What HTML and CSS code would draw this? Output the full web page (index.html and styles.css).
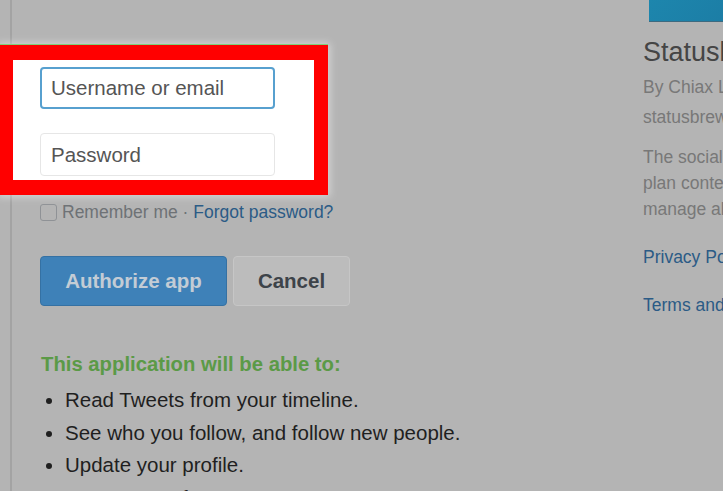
FILE: index.html
```html
<!DOCTYPE html>
<html lang="en">
<head>
<meta charset="utf-8">
<title>Authorize app</title>
<link rel="stylesheet" href="styles.css">
</head>
<body>
<div class="page">
  <main class="main">
    <div class="fields">
      <div class="spot" aria-hidden="true"></div>
      <div class="input focused">Username or email</div>
      <div class="input">Password</div>
    </div>
    <div class="remember">
      <span class="check"></span>
      <span class="rem-text">Remember me · </span><a class="link" href="#">Forgot password?</a>
    </div>
    <div class="buttons">
      <button class="btn btn-primary">Authorize app</button>
      <button class="btn btn-cancel">Cancel</button>
    </div>
    <h2 class="perm-title">This application will be able to:</h2>
    <ul class="perms">
      <li>Read Tweets from your timeline.</li>
      <li>See who you follow, and follow new people.</li>
      <li>Update your profile.</li>
      <li>Post Tweets for you.</li>
    </ul>
  </main>
  <aside class="side">
    <div class="app-logo"></div>
    <h1 class="app-name">Statusbrew</h1>
    <p class="app-by">By Chiax Labs</p>
    <p class="app-url">statusbrew.com</p>
    <p class="app-desc">The social media management platform<br>plan content, engage and grow, and<br>manage all your social accounts.</p>
    <p class="app-link"><a class="link" href="#">Privacy Policy</a></p>
    <p class="app-link"><a class="link" href="#">Terms and Conditions</a></p>
  </aside>
</div>
</body>
</html>
```

FILE: styles.css
```css
* { box-sizing: border-box; }
html, body { margin: 0; padding: 0; }
body {
  background: #b4b4b4;
  font-family: "Liberation Sans", Arial, sans-serif;
  width: 723px;
  height: 491px;
  overflow: hidden;
}
.page {
  display: flex;
  height: 491px;
  overflow: hidden;
}
.main {
  flex: 0 0 633px;
  margin-left: 10px;
  border-left: 2px solid #a3a3a3;
  padding-left: 28px;
  padding-top: 67px;
}
.fields {
  position: relative;
  display: flex;
  flex-direction: column;
  gap: 24px;
  width: 235px;
}
.spot {
  position: absolute;
  left: -40px;
  top: -22px;
  width: 328px;
  height: 150px;
  background: #fff;
  border-style: solid;
  border-color: #ff0000;
  border-width: 15px 14px 15px 13px;
  box-shadow: 0 -1px 0 #7fd27a, 0 0 8px 2px rgba(255,255,255,0.45);
}
.input {
  position: relative;
  height: 42px;
  border: 1px solid #e6e6e6;
  border-radius: 4px;
  background: #fff;
  color: #555;
  font-size: 20.5px;
  line-height: 40px;
  padding-left: 10px;
}
.input.focused {
  border: 2px solid #57a0cf;
  line-height: 38px;
  padding-left: 9px;
}
.input + .input { height: 43px; line-height: 41px; }
.remember {
  display: flex;
  align-items: center;
  margin-top: 27px;
  height: 18px;
  font-size: 17.5px;
  color: #6e7276;
}
.check {
  width: 17px;
  height: 17px;
  border: 1.5px solid #8f9296;
  border-radius: 3px;
  margin-right: 5px;
}
.rem-text { white-space: pre; }
.link { color: #2b5b86; text-decoration: none; }
.buttons {
  display: flex;
  gap: 6px;
  margin-top: 35px;
}
.btn {
  height: 50px;
  border-radius: 4px;
  font-family: "Liberation Sans", Arial, sans-serif;
  font-weight: bold;
  font-size: 20.5px;
  padding: 0;
}
.btn-primary {
  width: 187px;
  background: #3e81b8;
  border: 1px solid #3571a3;
  color: #c3ccd5;
}
.btn-cancel {
  width: 117px;
  background: #bcbcbc;
  border: 1px solid #c6c6c6;
  color: #3d4349;
}
.perm-title {
  margin: 44px 0 0 1px;
  font-size: 20.3px;
  font-weight: bold;
  color: #5b9a47;
  line-height: 28px;
}
.perms {
  margin: 6px 0 0 0;
  padding-left: 25px;
  font-size: 20.5px;
  line-height: 32.5px;
  color: #1f1f1f;
}
.side {
  flex: 0 0 260px;
  padding-left: 0;
  white-space: nowrap;
}
.app-logo {
  margin-left: 6px;
  height: 22px;
  width: 250px;
  background: linear-gradient(135deg, #1d86ad, #1a6e98);
  border-bottom: 1px solid #3d6a80;
}
.app-name {
  margin: 14px 0 0 0;
  font-size: 27px;
  font-weight: normal;
  color: #454545;
  line-height: 32px;
}
.app-by, .app-url {
  margin: 0;
  font-size: 17.5px;
  color: #787878;
  line-height: 30px;
}
.app-by { margin-top: 4px; }
.app-desc {
  margin: 12px 0 0 0;
  font-size: 17.5px;
  color: #787878;
  line-height: 26px;
}
.app-link {
  margin: 0;
  font-size: 17.5px;
  line-height: 26px;
}
.app-desc + .app-link { margin-top: 22px; }
.app-link + .app-link { margin-top: 22px; }
```
